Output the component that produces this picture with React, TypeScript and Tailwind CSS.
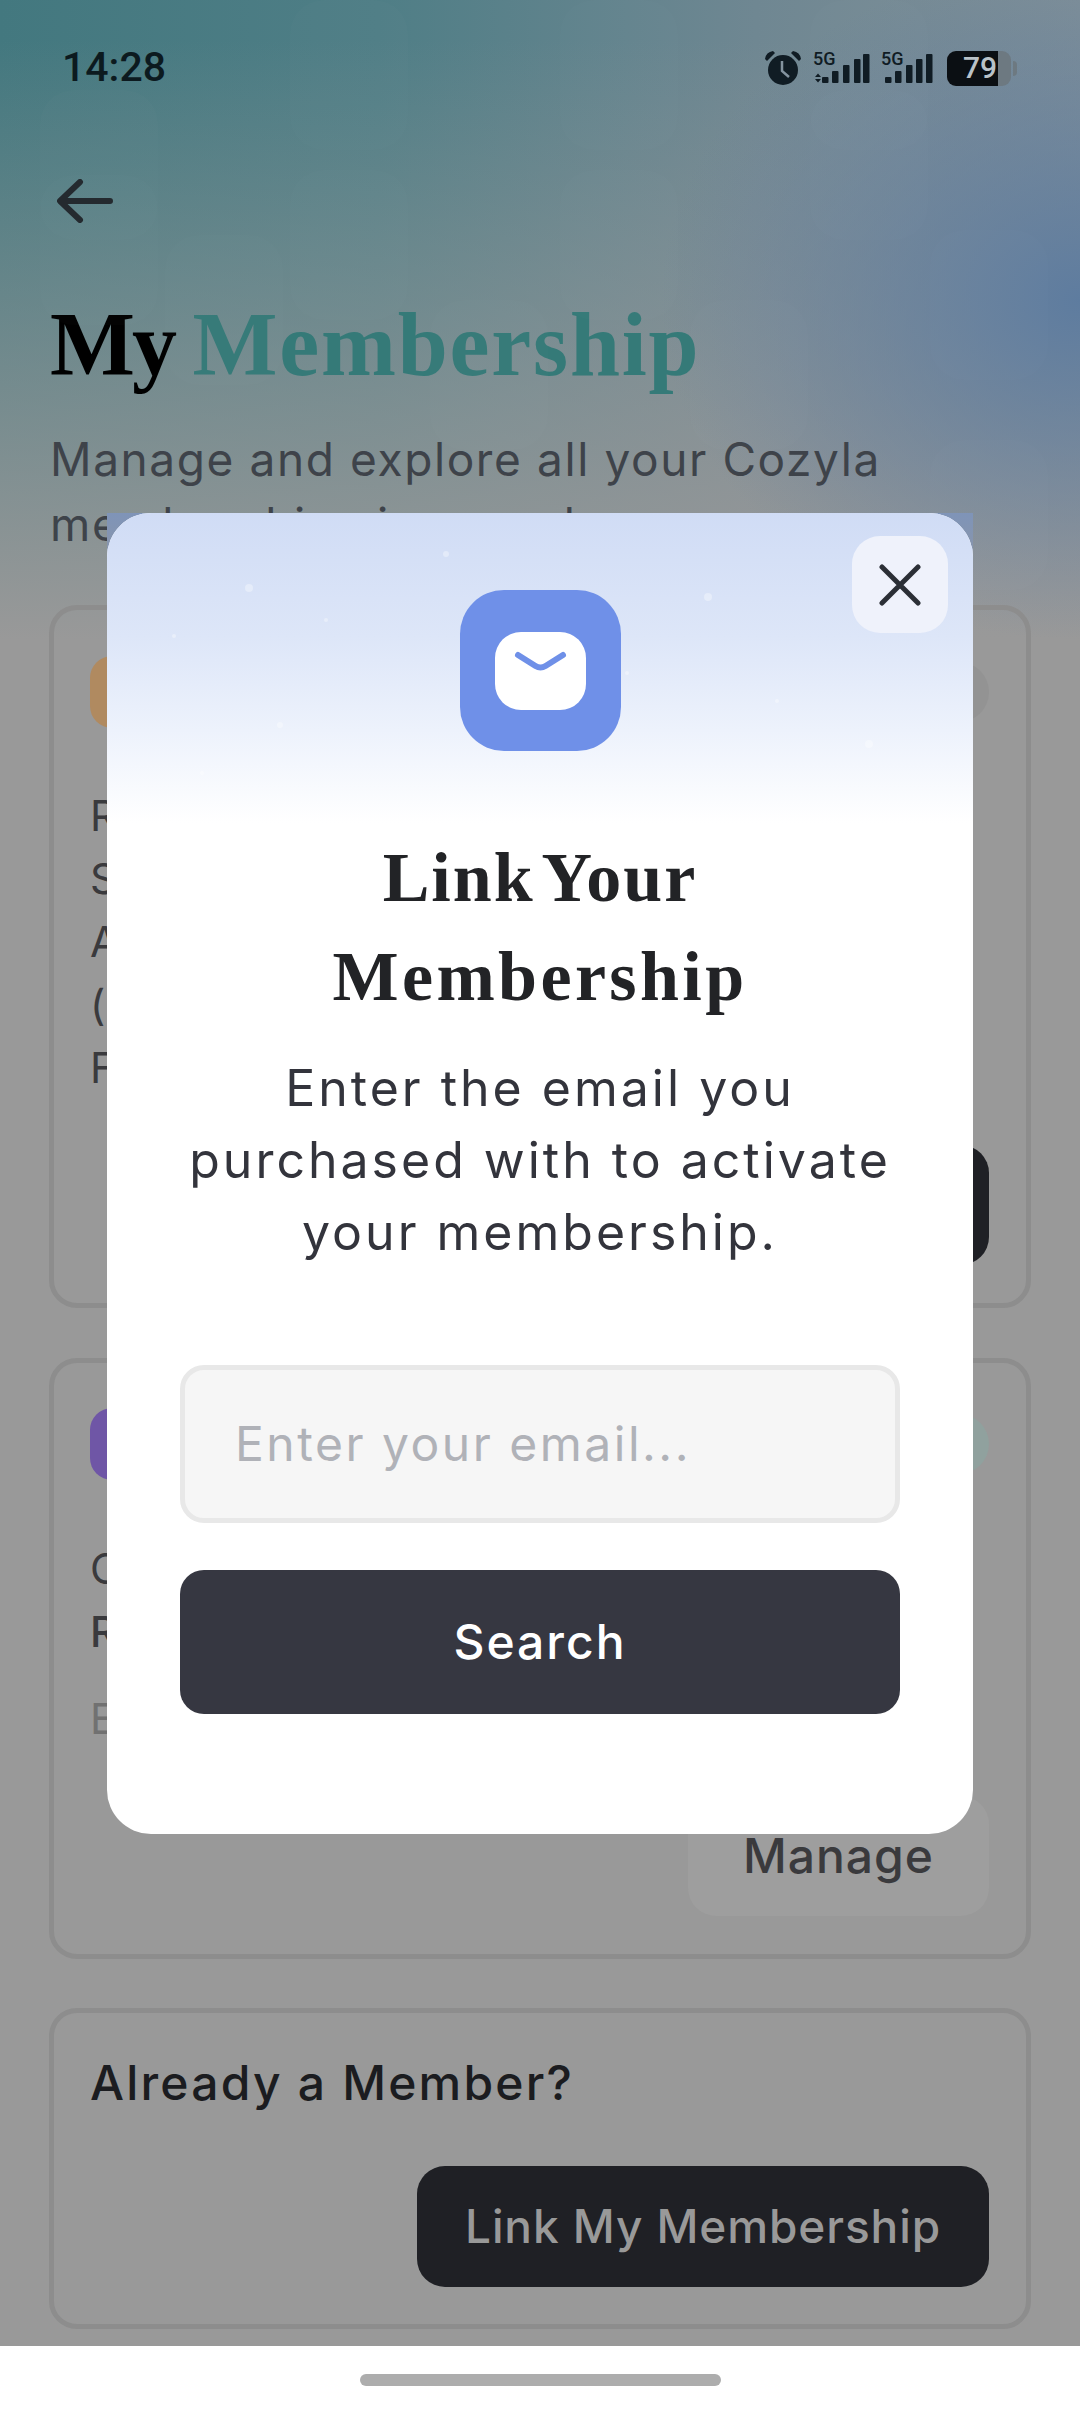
const SANS = "font-['Inter','Noto_Sans',sans-serif]";
const SERIF = "font-['Liberation_Serif',serif]";

function Signal({ updown }: { updown?: boolean }) {
  const bars = updown
    ? [[9, 27], [19, 21], [30, 15], [41, 9], [50, 4]]
    : [[4, 27], [14, 21], [25, 15], [35, 9], [45, 4]];
  return (
    <div className={`relative h-[36px] ${updown ? "w-[57px]" : "w-[52px]"}`}>
      <svg className="absolute inset-0" width="57" height="36" viewBox="0 0 57 36" fill="#101c24">
        {updown && <path d="M2 27l3-3.500 3 3.500zM2 29l3 3.500 3-3.500z" />}
        {bars.map(([x, y]) => (
          <rect key={x} x={x} y={y} width="6.500" height={33 - y} rx="1" />
        ))}
      </svg>
      <span className="absolute left-0 top-[1px] font-['Roboto',sans-serif] text-[18px] font-medium leading-[16px] text-[#101c24]">5G</span>
    </div>
  );
}

function StatusBar() {
  return (
    <div className="flex h-[36px] items-center justify-between pl-[62px] pr-[63px]">
      <span className="font-['Roboto',sans-serif] text-[41px] font-medium text-[#0c1a1f]">14:28</span>
      <div className="flex items-center">
        <svg className="mr-[11px]" width="38" height="36" viewBox="0 0 38 36" fill="#101c24">
          <path d="M1 9 Q2 2 9 1 L11 3 L3 11 Z M37 9 Q36 2 29 1 L27 3 L35 11 Z" />
          <circle cx="19" cy="20" r="15" />
          <path d="M18 11 V21 L25 27" fill="none" stroke="#84939f" strokeWidth="2.500" />
        </svg>
        <div className="mr-[11px]">
          <Signal updown />
        </div>
        <div className="mr-[14px]">
          <Signal />
        </div>
        <div className="flex h-[35px] items-center">
          <div className="flex h-full w-[64px] overflow-hidden rounded-[9px] bg-[#6d7981]">
            <div className="flex w-[51px] items-center justify-end bg-[#0b0f13] pr-[1px] font-['Roboto',sans-serif] text-[30px] font-medium leading-none text-[#b9c2c8]">
              79
            </div>
          </div>
          <div className="ml-[2px] h-[15px] w-[4px] rounded-r-full bg-[#6d7981]" />
        </div>
      </div>
    </div>
  );
}

function BackArrow() {
  return (
    <svg width="56" height="44" viewBox="0 0 56 44" fill="none" stroke="#20262b" strokeWidth="6" strokeLinecap="round" strokeLinejoin="round">
      <path d="M53 22H4M23 3 3 22l20 19" />
    </svg>
  );
}

// faint app-icon tiles in the header artwork
const TILES = [
  [40, 90], [290, 0], [560, 0], [810, 90], [40, 175], [290, 170], [560, 170], [810, 0],
  [165, 235], [430, 300], [690, 300], [930, 230], [930, 440],
];

function HeaderTiles() {
  return (
    <svg className="pointer-events-none absolute left-0 top-0" width="1080" height="600" viewBox="0 0 1080 600" fill="#ffffff" fillOpacity="0.01">
      {TILES.map(([x, y]) => (
        <rect key={`${x}-${y}`} x={x} y={y} width="118" height="150" rx="34" />
      ))}
    </svg>
  );
}

function Card({ className, children }: { className: string; children: React.ReactNode }) {
  return <div className={`flex flex-col rounded-[28px] border-[5px] border-[#8d8d8d] pl-[36px] pr-[37px] ${className}`}>{children}</div>;
}

function CardHead({ icon, badge }: { icon: string; badge: string }) {
  return (
    <div className="flex items-center justify-between">
      <div className={`h-[72px] w-[72px] rounded-[22px] ${icon}`} />
      <div className={`h-[60px] w-[120px] rounded-full ${badge}`} />
    </div>
  );
}

const SPARKLES = [
  [142, 75, 4], [339, 41, 3], [601, 84, 4], [173, 212, 3], [670, 188, 2], [762, 231, 4],
  [67, 123, 2], [219, 107, 2], [412, 121, 1.500], [520, 160, 2], [95, 260, 2],
];

function MailIcon() {
  return (
    <svg width="161" height="161" viewBox="0 0 161 161">
      <rect width="161" height="161" rx="44" fill="#6f90e8" />
      <rect x="35" y="42" width="91" height="78" rx="26" fill="#ffffff" />
      <path d="M58 65l17.500 11c3.300 2 6.700 2 10 0L103 65" fill="none" stroke="#6f90e8" strokeWidth="6" strokeLinecap="round" strokeLinejoin="round" />
    </svg>
  );
}

function LinkModal() {
  return (
    <div className="absolute left-[107px] top-[513px] w-[866px]">
      <div className="absolute inset-x-0 top-0 h-[56px] bg-gradient-to-b from-[#7f94b8] to-[#8b95a6]" />
      <div className={`relative flex h-[1321px] flex-col items-center overflow-hidden rounded-[44px] bg-white ${SANS}`}>
        <div className="absolute inset-x-0 top-0 h-[310px] bg-[linear-gradient(180deg,#d0dcf5_0%,#dde6f8_40%,#edf2fc_70%,#ffffff_100%)]" />
        <svg className="absolute left-0 top-0" width="866" height="300" viewBox="0 0 866 300" fill="#ffffff" fillOpacity="0.35">
          {SPARKLES.map(([x, y, r]) => (
            <circle key={`${x}-${y}`} cx={x} cy={y} r={r} />
          ))}
        </svg>
        <button className="absolute right-[25px] top-[23px] flex h-[97px] w-[96px] items-center justify-center rounded-[28px] bg-[#eff2fb]">
          <svg width="42" height="42" viewBox="0 0 42 42" fill="none" stroke="#2b2f36" strokeWidth="5" strokeLinecap="round">
            <path d="M3 3l36 36M39 3 3 39" />
          </svg>
        </button>
        <div className="relative mt-[77px]">
          <MailIcon />
        </div>
        <h2 className={`relative mt-[77px] text-center ${SERIF} text-[70px] font-bold leading-[99px] text-[#222326]`}>
          <span className="tracking-[2px] [word-spacing:-10px]">Link Your</span>
          <br />
          <span className="tracking-[3.400px]">Membership</span>
        </h2>
        <p className="mt-[26px] text-center text-[50px] leading-[72px] tracking-[3px] text-[#33343c]">
          Enter the email you
          <br />
          purchased with to activate
          <br />
          your membership.
        </p>
        <div className="mt-[97px] flex h-[158px] w-[720px] items-center rounded-[24px] border-[5px] border-[#e8e8e8] bg-[#f6f6f6] pl-[50px] text-[48px] tracking-[2.500px] text-[#b0b2b8]">
          Enter your email...
        </div>
        <button className="mt-[47px] flex h-[144px] w-[720px] items-center justify-center rounded-[24px] bg-[#363741] text-[48px] font-medium tracking-[2px] text-white">
          Search
        </button>
      </div>
    </div>
  );
}

export default function App() {
  return (
    <div className="relative flex h-[2414px] w-[1080px] flex-col overflow-hidden bg-white">
      <main className={`relative flex h-[2346px] flex-col bg-[#999999] bg-[radial-gradient(ellipse_420px_340px_at_1080px_300px,#5e7c9f_0%,rgba(94,124,159,0)_100%),linear-gradient(180deg,rgba(153,153,153,0)_40px,#999999_640px),linear-gradient(90deg,#43787f_0%,#4f7e86_35%,#6f8792_70%,#7f8f98_100%)] ${SANS}`}>
        <HeaderTiles />
        <div className="pt-[50px]">
          <StatusBar />
        </div>
        <div className="ml-[57px] mt-[93px] h-[44px]">
          <BackArrow />
        </div>
        <h1 className={`ml-[50px] mt-[67px] ${SERIF} text-[90px] font-bold leading-[110px] text-black [word-spacing:-4px]`}>
          <span className="tracking-[-3px]">My</span> <span className="tracking-[1.800px] text-[#357a78]">Membership</span>
        </h1>
        <p className="ml-[50px] mt-[27px] w-[900px] text-[46px] leading-[65px] tracking-[1.600px] text-[#3e434a]">
          Manage and explore all your Cozyla
          <br />
          memberships in one place
        </p>

        <div className="mt-[48px] flex flex-col px-[49px]">
          <Card className="h-[703px] pt-[46px]">
            <CardHead icon="bg-[#b08a60]" badge="bg-[#939393]" />
            <div className="mt-[56px] text-[42px] leading-[63px] text-[#3a3a3d]">
              <div>R</div>
              <div>S</div>
              <div>A</div>
              <div>(</div>
              <div>F</div>
            </div>
            <div className="mt-[46px] self-end">
              <div className="h-[120px] w-[300px] rounded-[28px] bg-[#1f2025]" />
            </div>
          </Card>

          <Card className="mt-[50px] h-[601px] pt-[45px]">
            <CardHead icon="bg-[#6f56a6]" badge="bg-[#90a19e]" />
            <div className="mt-[57px] text-[42px] leading-[63px] text-[#3a3a3d]">
              <div>C</div>
              <div className="font-medium">R</div>
            </div>
            <div className="mt-[24px] text-[42px] leading-[63px] text-[#717171]">E</div>
            <div className="mt-[46px] flex h-[120px] w-[301px] items-center justify-center self-end rounded-[28px] bg-[#9e9e9e] text-[48px] font-medium tracking-[1px] text-[#3a3a3d]">
              Manage
            </div>
          </Card>

          <Card className="mt-[49px] h-[321px] pt-[40px]">
            <div className="text-[48px] font-medium leading-[60px] tracking-[2.200px] text-[#1b1c20]">Already a Member?</div>
            <button className="mt-[53px] flex h-[121px] w-[572px] items-center justify-center self-end rounded-[28px] bg-[#1f2025] text-[46px] font-medium tracking-[0.900px] text-[#999999]">
              Link My Membership
            </button>
          </Card>
        </div>
      </main>

      <footer className="flex h-[68px] items-start justify-center bg-white pt-[28px]">
        <div className="h-[12px] w-[361px] rounded-full bg-[#adadad]" />
      </footer>

      <LinkModal />
    </div>
  );
}
